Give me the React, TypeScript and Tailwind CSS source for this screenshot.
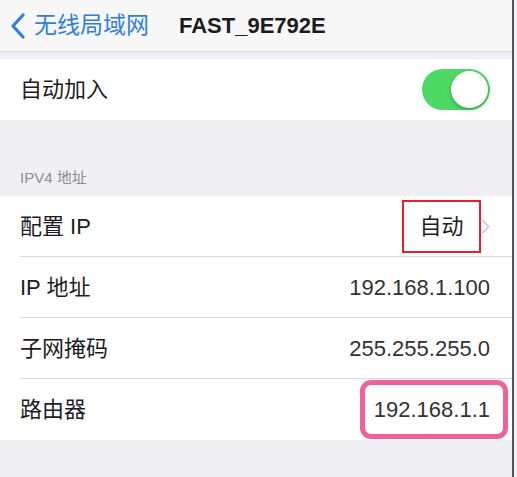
import React from "react";

const FONT = "font-['Liberation_Sans','Noto_Sans_CJK_SC',sans-serif]";

function Row({ label, children, last }: { label: string; children?: React.ReactNode; last?: boolean }) {
  return (
    <div className="flex h-[61px] bg-white pl-5">
      <div
        className={`flex flex-1 items-center justify-between pr-[22px] ${last ? "" : "border-b border-[#d9d9dd]"}`}
      >
        <span className="text-[22px] text-[#1c1c1e]">{label}</span>
        {children}
      </div>
    </div>
  );
}

export default function App() {
  return (
    <div className={`flex h-[477px] w-[517px] overflow-hidden ${FONT}`}>
      <div className="flex w-[512px] flex-col bg-[#efeff4]">
        {/* nav bar */}
        <div className="flex h-[52px] items-center border-b border-[#dcdce0] bg-[#f7f7f8]">
          <div className="flex items-center pl-[10px] text-[#2f7fe0]">
            <svg width="16" height="26" viewBox="0 0 16 26" fill="none">
              <path d="M13 2 L3 13 L13 24" stroke="#2f7fe0" strokeWidth="3.2" strokeLinecap="round" strokeLinejoin="round" />
            </svg>
            <span className="ml-[8px] text-[23px]">无线局域网</span>
          </div>
          <span className="ml-[30px] text-[22px] font-bold text-[#1c1c1e]">FAST_9E792E</span>
        </div>

        <div className="h-[7px]" />

        {/* auto join */}
        <div className="flex h-[61px] items-center justify-between bg-white pl-5 pr-[22px]">
          <span className="text-[22px] text-[#1c1c1e]">自动加入</span>
          <div className="flex h-[41px] w-[68px] items-center justify-end rounded-full bg-[#4cd964] p-[2px]">
            <div className="h-[37px] w-[37px] rounded-full bg-white shadow-[0_2px_4px_rgba(0,0,0,0.25)]" />
          </div>
        </div>

        {/* section header */}
        <div className="flex h-[76px] items-end pb-[7px] pl-5">
          <span className="text-[15px] text-[#8e8e93]">IPV4 地址</span>
        </div>

        <Row label="配置 IP">
          <div className="flex items-center">
            <div className="flex h-[53px] w-[79px] items-center justify-center border-2 border-[#e8202a]">
              <span className="text-[22px] text-[#1c1c1e]">自动</span>
            </div>
            <svg className="ml-[1px]" width="8" height="15" viewBox="0 0 8 15" fill="none">
              <path d="M1 1.5 L6.5 7.5 L1 13.5" stroke="#c7c7cc" strokeWidth="1.6" strokeLinecap="round" strokeLinejoin="round" />
            </svg>
          </div>
        </Row>
        <Row label="IP 地址">
          <span className="text-[22px] text-[#333]">192.168.1.100</span>
        </Row>
        <Row label="子网掩码">
          <span className="text-[22px] text-[#333]">255.255.255.0</span>
        </Row>
        <div className="flex h-[61px] items-center justify-between bg-white pl-5 pr-[4px]">
          <span className="text-[22px] text-[#1c1c1e]">路由器</span>
          <div className="flex h-[59px] w-[148px] items-center justify-end rounded-[11px] border-[5px] border-[#f0609a] bg-white pr-[13px]">
            <span className="text-[22px] text-[#333]">192.168.1.1</span>
          </div>
        </div>
      </div>
      <div className="w-[2px] bg-[#555]" />
      <div className="flex-1 bg-[#f4f4f6]" />
    </div>
  );
}
